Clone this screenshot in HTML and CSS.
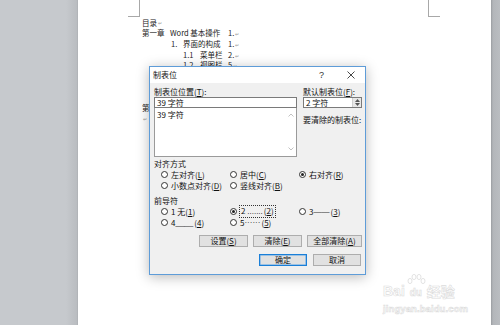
FILE: index.html
```html
<!DOCTYPE html>
<html lang="zh-CN">
<head>
    <meta charset="UTF-8">
    <title>制表位</title>
    <link rel="stylesheet" href="styles.css">
</head>
<body>
    <div class="gutter-left"></div>
    <div class="page">
        <div class="margins">
            <div class="mark mark-left"></div>
            <div class="mark mark-right"></div>
        </div>
        <div class="doc">
            <div class="line">目录<i>↵</i></div>
            <div class="line"><span class="chap">第一章</span><span class="ttl0">Word 基本操作</span><span>1.<i>↵</i></span></div>
            <div class="line lvl1"><span class="n1">1.</span><span class="ttl1">界面的构成</span><span>1.<i>↵</i></span></div>
            <div class="line lvl2"><span class="n2">1.1</span><span class="ttl2">菜单栏</span><span>2.<i>↵</i></span></div>
            <div class="line lvl2"><span class="n2">1.2</span><span class="ttl2">视图栏</span><span>5<i>↵</i></span></div>
            <div class="hidden-lines"></div>
            <div class="line"><span class="clip">第</span></div>
            <div class="line"><i>↵</i></div>
        </div>

        <div class="dialog">
            <div class="titlebar">
                <span class="title">制表位</span>
                <span class="title-btn">?</span>
                <span class="title-btn">
                    <svg width="8" height="8" viewBox="0 0 8 8"><path d="M0.5 0.5 L7.5 7.5 M7.5 0.5 L0.5 7.5" stroke="#333" stroke-width="0.9"/></svg>
                </span>
            </div>
            <div class="dlg-body">
                <div class="top">
                    <div class="col">
                        <div class="label">制表位位置(<u>T</u>):</div>
                        <div class="input">39 字符</div>
                        <div class="list">
                            <div class="list-item">39 字符</div>
                            <div class="scroll">
                                <svg width="6" height="4" viewBox="0 0 6 4"><path d="M0.5 3.5 L3 1 L5.5 3.5" fill="none" stroke="#c2c2c2"/></svg>
                                <svg width="6" height="4" viewBox="0 0 6 4"><path d="M0.5 0.5 L3 3 L5.5 0.5" fill="none" stroke="#c2c2c2"/></svg>
                            </div>
                        </div>
                    </div>
                    <div class="col">
                        <div class="label">默认制表位(<u>F</u>):</div>
                        <div class="input spin">
                            <span>2 字符</span>
                            <span class="spin-btns">
                                <svg width="5" height="3" viewBox="0 0 5 3"><path d="M0 3 L2.5 0 L5 3 Z" fill="#555"/></svg>
                                <svg width="5" height="3" viewBox="0 0 5 3"><path d="M0 0 L2.5 3 L5 0 Z" fill="#555"/></svg>
                            </span>
                        </div>
                        <div class="label clear-label">要清除的制表位:</div>
                    </div>
                </div>

                <div class="group-label">对齐方式</div>
                <div class="options">
                    <div class="opt"><span class="radio"></span>左对齐(<u>L</u>)</div>
                    <div class="opt"><span class="radio"></span>居中(<u>C</u>)</div>
                    <div class="opt"><span class="radio checked"></span>右对齐(<u>R</u>)</div>
                    <div class="opt"><span class="radio"></span>小数点对齐(<u>D</u>)</div>
                    <div class="opt"><span class="radio"></span>竖线对齐(<u>B</u>)</div>
                </div>

                <div class="group-label leader-label">前导符</div>
                <div class="options">
                    <div class="opt"><span class="radio"></span>1 无(<u>1</u>)</div>
                    <div class="opt"><span class="radio checked"></span><span class="focus">2 <span class="latin">.......</span>(<u>2</u>)</span></div>
                    <div class="opt"><span class="radio"></span>3 <span class="latin">——</span>(<u>3</u>)</div>
                    <div class="opt"><span class="radio"></span>4 <span class="latin">____</span>(<u>4</u>)</div>
                    <div class="opt"><span class="radio"></span>5 <span class="latin">······</span>(<u>5</u>)</div>
                </div>

                <div class="buttons">
                    <div class="btn">设置(<u>S</u>)</div>
                    <div class="btn">清除(<u>E</u>)</div>
                    <div class="btn wide">全部清除(<u>A</u>)</div>
                </div>
                <div class="buttons ok-row">
                    <div class="btn default">确定</div>
                    <div class="btn">取消</div>
                </div>
            </div>
        </div>

        <div class="watermark">
            <div class="brand">
                <span>Bai</span>
                <span class="paw-du">
                    <svg width="20" height="13" viewBox="0 0 20 13">
                        <g fill="#fff" stroke="#dcdcdc" stroke-width="0.8">
                            <ellipse cx="4" cy="7" rx="2" ry="2.6"/>
                            <ellipse cx="8" cy="3" rx="2" ry="2.6"/>
                            <ellipse cx="13" cy="3" rx="2" ry="2.6"/>
                            <ellipse cx="17" cy="7" rx="2" ry="2.6"/>
                        </g>
                    </svg>
                    <span class="du">du</span>
                </span>
                <span class="jy">经验</span>
            </div>
            <div class="site">jingyan.baidu.com</div>
        </div>
    </div>
    <div class="gutter-right"></div>
</body>
</html>
```

FILE: styles.css
```css
body {
    margin: 0;
    width: 500px;
    height: 325px;
    overflow: hidden;
    display: flex;
    background-color: #c6c9cd;
    font-family: "Noto Sans CJK SC", "Liberation Sans", sans-serif;
    font-size: 8px;
    color: #222;
}
.gutter-left {
    width: 78px;
    background: linear-gradient(to right, #c6c9cd 66px, #b9bcc0 77px, #a9acb0 78px);
}
.gutter-right {
    width: 9px;
    background: linear-gradient(to right, #9a9da1 0, #b3b6ba 2px, #babdc1 9px);
}
.page {
    width: 413px;
    background-color: #fff;
    position: relative;
}

/* page corner marks */
.margins {
    display: flex;
    justify-content: space-between;
    width: 312px;
    margin-left: 50px;
}
.mark {
    width: 11px;
    height: 16px;
    border-bottom: 1px solid #a8a8a8;
}
.mark-left {
    border-right: 1px solid #a8a8a8;
}
.mark-right {
    border-left: 1px solid #a8a8a8;
}

/* document text */
.doc {
    padding-left: 64px;
    padding-top: 0.5px;
    font-size: 7.5px;
}
.line {
    display: flex;
    height: 10.7px;
    line-height: 10.7px;
    white-space: nowrap;
}
.line i {
    font-style: normal;
    font-size: 5px;
    color: #999;
    margin-left: 1px;
}
.hidden-lines {
    height: 32px;
}
.clip {
    width: 7px;
    overflow: hidden;
}
.chap { width: 28px; }
.ttl0 { width: 58px; }
.lvl1 { padding-left: 29px; }
.n1 { width: 12px; }
.ttl1 { width: 45px; }
.lvl2 { padding-left: 41px; }
.n2 { width: 17px; }
.ttl2 { width: 28px; }

/* dialog */
.dialog {
    position: absolute;
    left: 71px;
    top: 66px;
    width: 217px;
    height: 209px;
    box-sizing: border-box;
    border: 1px solid #5e9cd8;
    background-color: #f0f0f0;
    box-shadow: 0 2px 12px rgba(0, 0, 0, 0.28);
    color: #111;
}
.titlebar {
    height: 16px;
    display: flex;
    align-items: center;
    background-color: #fff;
    line-height: 16px;
}
.title {
    flex: 1;
    padding-left: 3px;
}
.title-btn {
    width: 29px;
    display: flex;
    justify-content: center;
    align-items: center;
    font-family: "Liberation Sans", sans-serif;
    font-size: 9px;
    color: #333;
}
.dlg-body {
    padding: 3px 3px 0 4px;
}
.top {
    display: grid;
    grid-template-columns: 143px 59px;
    column-gap: 6px;
}
.label {
    height: 11px;
    line-height: 11px;
    white-space: nowrap;
}
.clear-label {
    margin-top: 6px;
}
.input {
    height: 11px;
    box-sizing: border-box;
    border: 1px solid #7a7a7a;
    background-color: #fff;
    line-height: 9px;
    padding-left: 2px;
    white-space: nowrap;
}
.spin {
    display: flex;
    justify-content: space-between;
    padding-right: 0;
}
.spin-btns {
    width: 8px;
    display: flex;
    flex-direction: column;
    justify-content: center;
    align-items: center;
    gap: 1px;
    background-color: #e8e8e8;
    border-left: 1px solid #d0d0d0;
}
.list {
    height: 49px;
    box-sizing: border-box;
    border: 1px solid #9a9a9a;
    border-top: none;
    background-color: #fff;
    display: flex;
    justify-content: space-between;
}
.list-item {
    padding: 1px 0 0 2px;
    line-height: 11px;
}
.scroll {
    width: 10px;
    display: flex;
    flex-direction: column;
    justify-content: space-between;
    align-items: center;
    padding: 5px 0 5px;
}
.group-label {
    margin-top: 1px;
    height: 11px;
    line-height: 11px;
}
.leader-label {
    margin-top: 4px;
}
.options {
    display: grid;
    grid-template-columns: 69px 69px 1fr;
    grid-auto-rows: 11px;
    padding-left: 7px;
}
.opt {
    display: flex;
    align-items: center;
    white-space: nowrap;
}
.latin {
    font-family: "Liberation Sans", sans-serif;
    margin-right: 1px;
}
.radio {
    flex-shrink: 0;
    width: 7px;
    height: 7px;
    box-sizing: border-box;
    border: 1px solid #333;
    border-radius: 50%;
    background-color: #fff;
    margin-right: 3px;
    display: flex;
    justify-content: center;
    align-items: center;
}
.radio.checked::after {
    content: "";
    width: 3px;
    height: 3px;
    border-radius: 50%;
    background-color: #222;
}
.focus {
    outline: 1px dotted #333;
    padding: 0 1px;
    line-height: 10px;
}
.buttons {
    display: flex;
    justify-content: flex-end;
    gap: 5px;
    margin-top: 7px;
}
.btn {
    width: 49px;
    height: 12px;
    box-sizing: border-box;
    border: 1px solid #adadad;
    background-color: #e1e1e1;
    text-align: center;
    line-height: 10px;
    white-space: nowrap;
}
.btn.wide {
    width: 55px;
}
.ok-row {
    gap: 6px;
    padding-right: 1px;
}
.ok-row .btn {
    width: 48px;
}
.btn.default {
    border-color: #1a7fd8;
    box-shadow: inset 0 0 0 0.5px #5aa3e6;
}

/* baidu watermark */
.watermark {
    position: absolute;
    left: 305px;
    top: 271px;
    color: #fff;
    -webkit-text-stroke: 0.6px #dcdcdc;
}
.brand {
    display: flex;
    align-items: flex-end;
    height: 27px;
    font-family: "Liberation Sans", sans-serif;
    font-size: 14px;
    font-weight: bold;
    line-height: 14px;
}
.paw-du {
    display: flex;
    flex-direction: column;
    align-items: center;
    margin: 0 1px;
}
.du {
    font-size: 10px;
    line-height: 11px;
}
.jy {
    font-family: "Noto Sans CJK SC", sans-serif;
    font-size: 14px;
    line-height: 14px;
}
.site {
    margin-top: 5px;
    font-family: "Liberation Sans", sans-serif;
    font-size: 9.5px;
    font-weight: bold;
    letter-spacing: 0.1px;
}
```
